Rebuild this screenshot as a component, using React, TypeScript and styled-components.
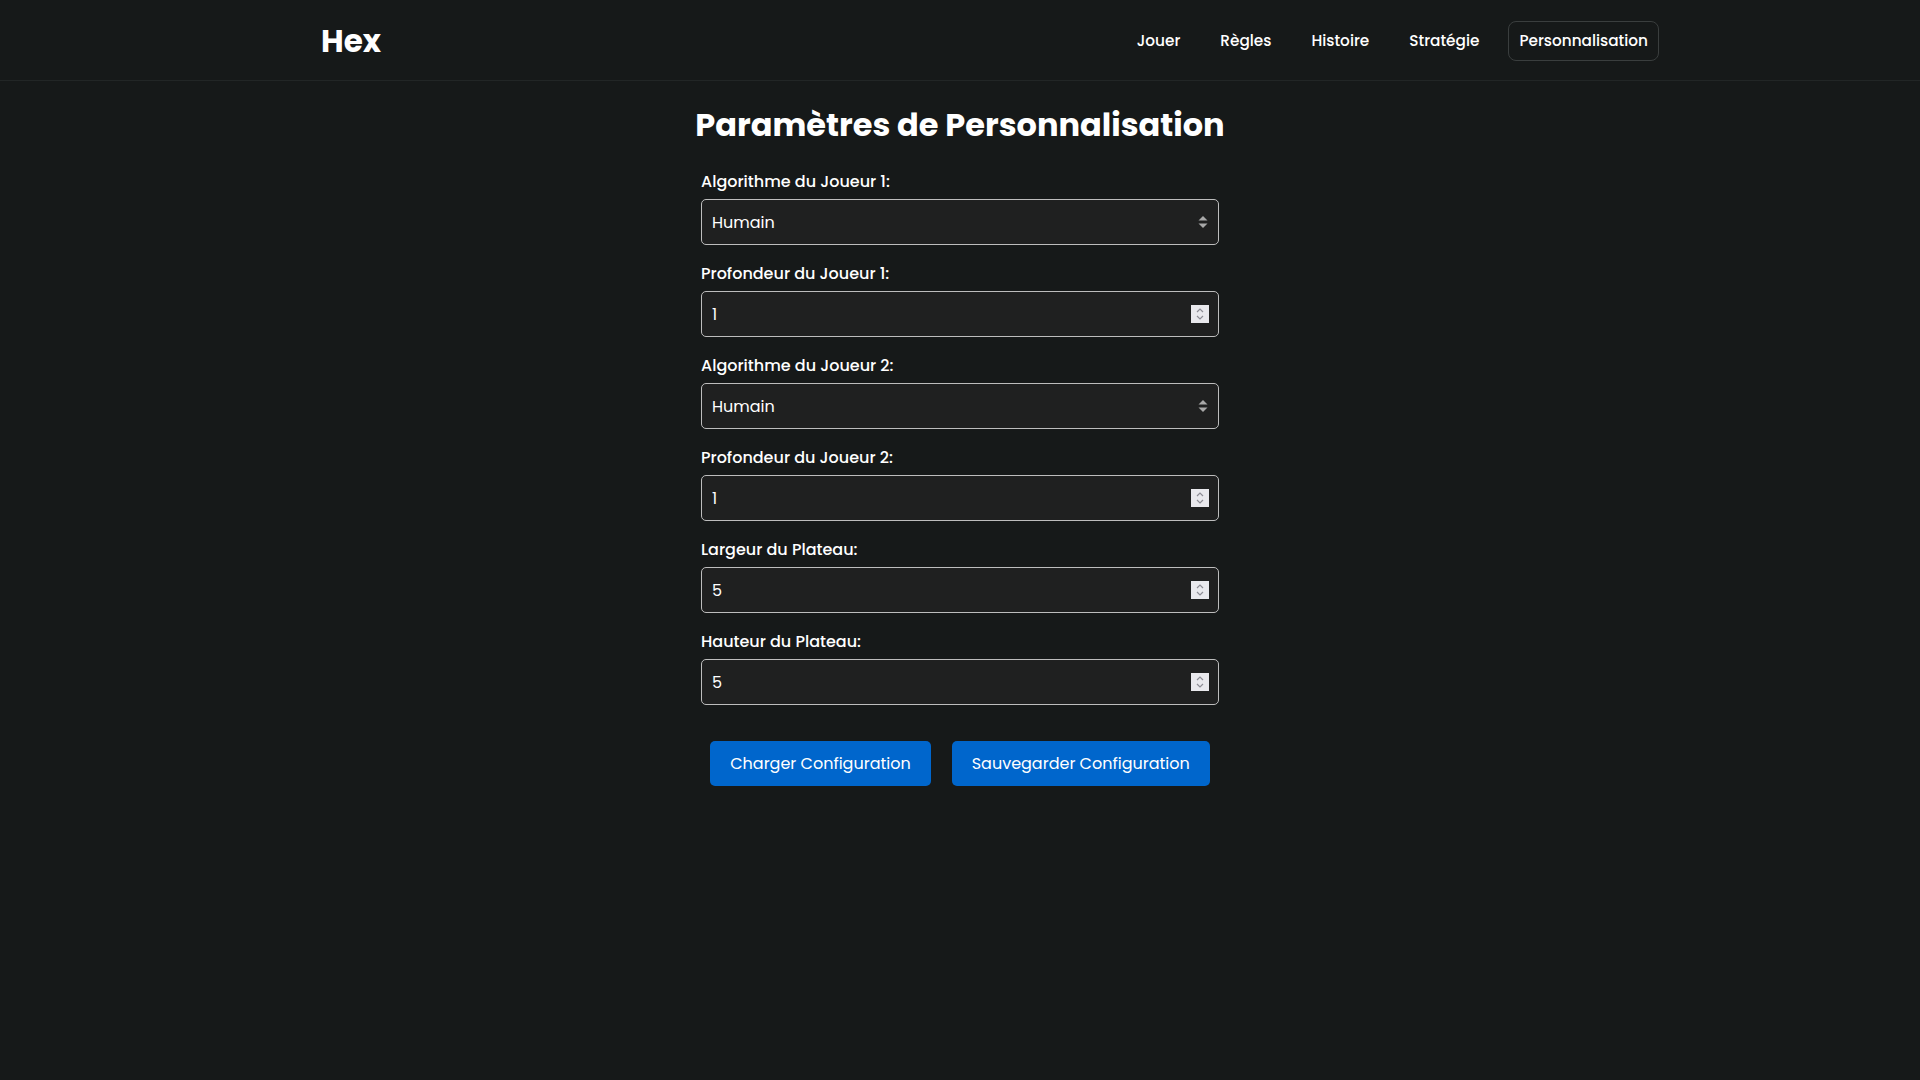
import React from "react";
import styled, { createGlobalStyle } from "styled-components";

const GlobalStyle = createGlobalStyle`
  html, body {
    margin: 0;
    padding: 0;
    background: #161919;
  }
  body {
    color: #ffffff;
    font-family: "Poppins", Inter, "Noto Sans", sans-serif;
    min-height: 1080px;
  }
  * { box-sizing: border-box; }
`;

const Page = styled.div`
  min-height: 1080px;
  background: #161919;
`;

const Header = styled.header`
  height: 81px;
  border-bottom: 1px solid #222626;
  display: flex;
  align-items: center;
  justify-content: space-between;
  padding: 0 261px 0 321px;
`;

const Logo = styled.div`
  font-size: 31px;
  font-weight: 700;
  line-height: 1;
  margin-top: 3px;
`;

const Nav = styled.nav`
  display: flex;
  align-items: center;
  gap: 18px;
  margin-top: 1px;
`;

const NavLink = styled.a<{ $active?: boolean }>`
  display: block;
  padding: 7px 10px;
  border: 1px solid ${(p) => (p.$active ? "#3a3e3e" : "transparent")};
  border-radius: 8px;
  color: #ffffff;
  font-size: 15.3px;
  font-weight: 500;
  line-height: 24px;
  text-decoration: none;
  cursor: pointer;
`;

const Main = styled.main`
  display: flex;
  flex-direction: column;
  align-items: center;
  padding-top: 20px;
`;

const Title = styled.h1`
  margin: 0 0 21px;
  font-size: 32px;
  font-weight: 700;
  line-height: 48px;
`;

const Form = styled.form`
  width: 518px;
  display: flex;
  flex-direction: column;
`;

const Field = styled.div`
  display: flex;
  flex-direction: column;
  margin-bottom: 17px;
`;

const Label = styled.label`
  font-size: 16px;
  font-weight: 500;
  line-height: 24px;
  margin-bottom: 5px;
`;

const Control = styled.div`
  position: relative;
  height: 46px;
`;

const fieldBase = `
  width: 100%;
  height: 46px;
  padding: 0 10px;
  background: #1f2020;
  border: 1px solid #bdbdbd;
  border-radius: 5px;
  color: #ffffff;
  font-family: "Poppins", Inter, "Noto Sans", sans-serif;
  font-size: 16px;
  font-weight: 400;
  outline: none;
`;

const Select = styled.select`
  ${fieldBase}
  appearance: none;
  -webkit-appearance: none;
`;

const NumberInput = styled.input`
  ${fieldBase}
  -moz-appearance: textfield;
  &::-webkit-inner-spin-button,
  &::-webkit-outer-spin-button {
    -webkit-appearance: none;
    margin: 0;
  }
`;

const SelectArrow = styled.svg`
  position: absolute;
  right: 11px;
  top: 50%;
  transform: translateY(-50%);
  pointer-events: none;
`;

const Spinner = styled.div`
  position: absolute;
  right: 10px;
  top: 50%;
  transform: translateY(-50%);
  width: 18px;
  height: 18px;
  background: #e9e9ed;
  display: flex;
  align-items: center;
  justify-content: center;
  pointer-events: none;
`;

const Actions = styled.div`
  display: flex;
  justify-content: center;
  gap: 21px;
  margin-top: 19px;
`;

const Button = styled.button`
  height: 45px;
  padding: 0 20px;
  background: #0066cc;
  border: none;
  border-radius: 5px;
  color: #ffffff;
  font-family: "Poppins", Inter, "Noto Sans", sans-serif;
  font-size: 16px;
  font-weight: 400;
  cursor: pointer;
`;

const Arrow = () => (
  <SelectArrow width="10" height="14" viewBox="0 0 10 14">
    <path d="M5 1 L9.5 5.6 L0.5 5.6 Z" fill="#a8a8a8" />
    <path d="M0.5 8.4 L9.5 8.4 L5 13 Z" fill="#a8a8a8" />
  </SelectArrow>
);

const Spin = () => (
  <Spinner>
    <svg width="10" height="14" viewBox="0 0 10 14">
      <path d="M2 5 L5 2 L8 5" stroke="#8d8d95" strokeWidth="1.2" fill="none" />
      <path d="M2 9 L5 12 L8 9" stroke="#8d8d95" strokeWidth="1.2" fill="none" />
    </svg>
  </Spinner>
);

type FieldDef =
  | { kind: "select"; label: string; value: string }
  | { kind: "number"; label: string; value: number };

const fields: FieldDef[] = [
  { kind: "select", label: "Algorithme du Joueur 1:", value: "Humain" },
  { kind: "number", label: "Profondeur du Joueur 1:", value: 1 },
  { kind: "select", label: "Algorithme du Joueur 2:", value: "Humain" },
  { kind: "number", label: "Profondeur du Joueur 2:", value: 1 },
  { kind: "number", label: "Largeur du Plateau:", value: 5 },
  { kind: "number", label: "Hauteur du Plateau:", value: 5 },
];

export default function App() {
  return (
    <Page>
      <GlobalStyle />
      <Header>
        <Logo>Hex</Logo>
        <Nav>
          <NavLink>Jouer</NavLink>
          <NavLink>Règles</NavLink>
          <NavLink>Histoire</NavLink>
          <NavLink>Stratégie</NavLink>
          <NavLink $active>Personnalisation</NavLink>
        </Nav>
      </Header>
      <Main>
        <Title>Paramètres de Personnalisation</Title>
        <Form onSubmit={(e) => e.preventDefault()}>
          {fields.map((f, i) => (
            <Field key={i}>
              <Label>{f.label}</Label>
              <Control>
                {f.kind === "select" ? (
                  <>
                    <Select defaultValue={f.value}>
                      <option>Humain</option>
                      <option>Minimax</option>
                      <option>Alpha-Beta</option>
                    </Select>
                    <Arrow />
                  </>
                ) : (
                  <>
                    <NumberInput type="number" defaultValue={f.value} />
                    <Spin />
                  </>
                )}
              </Control>
            </Field>
          ))}
          <Actions>
            <Button type="button">Charger Configuration</Button>
            <Button type="button">Sauvegarder Configuration</Button>
          </Actions>
        </Form>
      </Main>
    </Page>
  );
}
